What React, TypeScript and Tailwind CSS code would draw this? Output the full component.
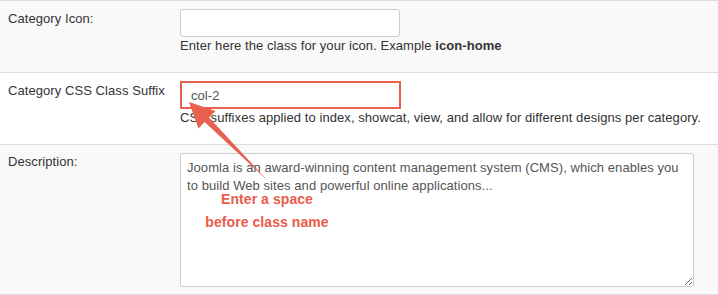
export default function App() {
  return (
    <div className="relative h-[295px] w-[718px] overflow-hidden bg-white font-['Liberation_Sans',Arial,sans-serif] text-[13px] leading-[18px] tracking-[0.07px] text-[#333]">
      {/* Category Icon */}
      <div className="flex h-[72px] border-t border-[#ddd] bg-[#f9f9f9]">
        <div className="w-[180px] pl-2 pt-[9px]">Category Icon:</div>
        <div className="pt-2">
          <input
            readOnly
            className="block h-[28px] w-[220px] rounded-[3px] border border-[#ccc] bg-white px-2 outline-none"
          />
          <p>
            Enter here the class for your icon. Example <b>icon-home</b>
          </p>
        </div>
      </div>

      {/* Category CSS Class Suffix */}
      <div className="flex h-[72px] border-t border-[#ddd] bg-white">
        <div className="w-[180px] pl-2 pt-[9px]">Category CSS Class Suffix</div>
        <div className="pt-2">
          <input
            readOnly
            defaultValue="col-2"
            className="block h-[28px] w-[221px] border-2 border-[#e8604f] bg-white pl-[9px] text-[#555] outline-none"
          />
          <p>CSS suffixes applied to index, showcat, view, and allow for different designs per category.</p>
        </div>
      </div>

      {/* Description */}
      <div className="flex h-[151px] border-y border-[#ddd] bg-[#f9f9f9]">
        <div className="w-[180px] pl-2 pt-2">Description:</div>
        <div className="pt-2">
          <textarea
            readOnly
            defaultValue={
              'Joomla is an award-winning content management system (CMS), which enables you\nto build Web sites and powerful online applications...'
            }
            className="block h-[134px] w-[514px] rounded-[3px] border border-[#ccc] bg-white px-[6px] pt-[5px] text-[#555] outline-none"
          />
        </div>
      </div>

      {/* annotation arrow */}
      <svg className="absolute left-0 top-0" width="718" height="295" viewBox="0 0 718 295">
        <polygon
          points="189,102 215.5,111 209,117.6 268,181 204.6,122 198.5,128.5"
          fill="#e8604f"
        />
      </svg>

      {/* annotation text */}
      <div className="absolute left-[167px] top-[188px] w-[200px] text-center text-[14px] font-bold leading-[23px] text-[#ea5b4b] [text-shadow:0_0_3px_#fff,0_0_3px_#fff,0_0_4px_#fff]">
        <div>Enter a space</div>
        <div>before class name</div>
      </div>
    </div>
  );
}
